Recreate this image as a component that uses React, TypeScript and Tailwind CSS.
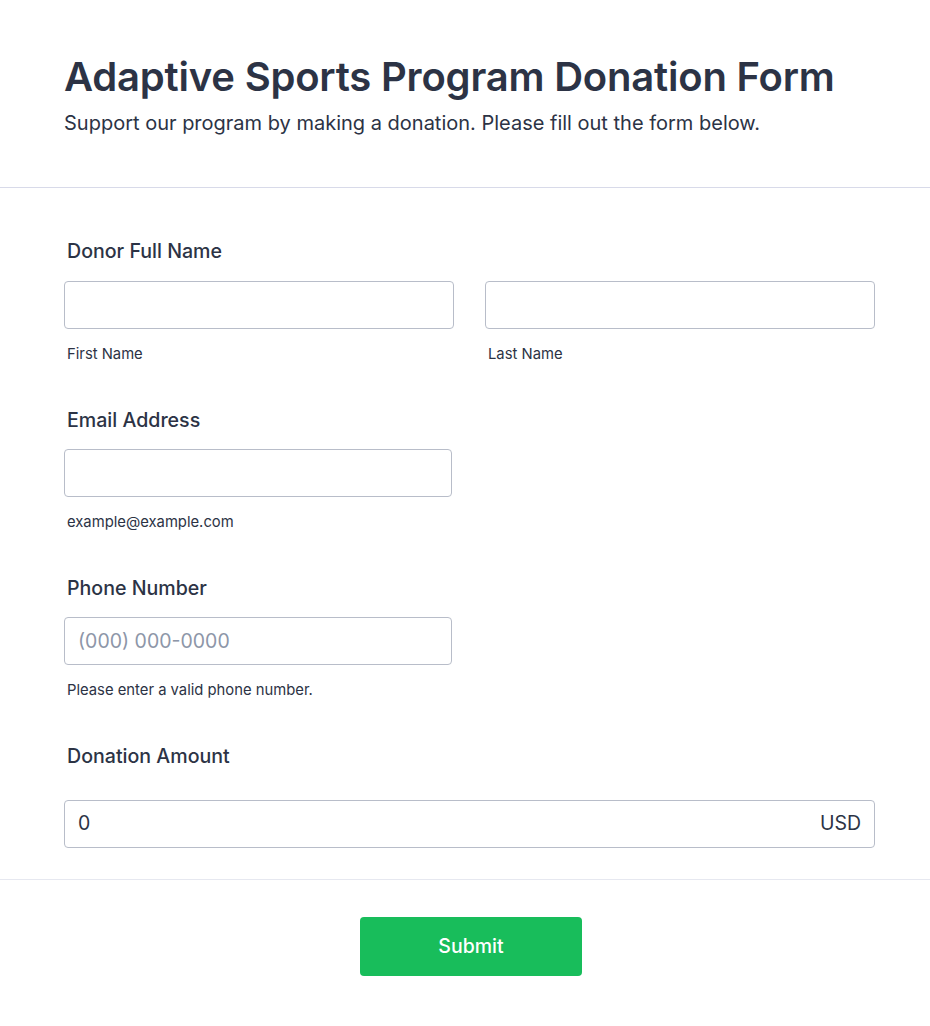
import React from 'react';

const font = { fontFamily: 'Inter, "Noto Sans", sans-serif' };

const Label: React.FC<{ text: string; className?: string }> = ({ text, className = '' }) => (
  <div className={`pl-[3px] text-[19.6px] leading-[27px] font-medium text-[#2c3345] ${className}`}>{text}</div>
);

const Sub: React.FC<{ text: string }> = ({ text }) => (
  <div className="mt-[15px] pl-[3px] text-[14.8px] leading-[21px] text-[#2c3345]">{text}</div>
);

const inputClass =
  'h-12 w-full rounded-[4px] border border-[#b8bdc9] bg-white px-[13px] text-[19.5px] text-[#2c3345] outline-none placeholder:text-[#8d96a8]';

export default function App() {
  return (
    <div style={font} className="min-h-[1026px] bg-white text-[#2c3345]">
      <header className="border-b border-[#d8dae9] px-16 pt-[53px] pb-[50px]">
        <h1 className="text-[40px] leading-[48px] font-semibold tracking-[-0.2px]">
          Adaptive Sports Program Donation Form
        </h1>
        <p className="mt-[9px] text-[20px] leading-[27px]">
          Support our program by making a donation. Please fill out the form below.
        </p>
      </header>

      <main className="border-b border-[#e6e8f0] pl-16 pr-[55px] pt-[50px] pb-[31px]">
        <section>
          <Label text="Donor Full Name" />
          <div className="mt-[16px] grid grid-cols-2 gap-[31px]">
            <div>
              <input className={inputClass} />
              <Sub text="First Name" />
            </div>
            <div>
              <input className={inputClass} />
              <Sub text="Last Name" />
            </div>
          </div>
        </section>

        <section className="mt-[42px] w-[388px]">
          <Label text="Email Address" />
          <input className={`${inputClass} mt-[15px]`} />
          <Sub text="example@example.com" />
        </section>

        <section className="mt-[42px] w-[388px]">
          <Label text="Phone Number" />
          <input className={`${inputClass} mt-[15px]`} placeholder="(000) 000-0000" />
          <Sub text="Please enter a valid phone number." />
        </section>

        <section className="mt-[42px]">
          <Label text="Donation Amount" />
          <div className="mt-[30px] flex h-12 items-center rounded-[4px] border border-[#b8bdc9] px-[13px] text-[19.5px]">
            <span className="flex-1">0</span>
            <span>USD</span>
          </div>
        </section>
      </main>

      <div className="flex justify-center pl-[12px] pt-[37px]">
        <button className="h-[59px] w-[222px] rounded-[4px] bg-[#18bd5b] text-[19.5px] font-medium text-white">
          Submit
        </button>
      </div>
    </div>
  );
}
